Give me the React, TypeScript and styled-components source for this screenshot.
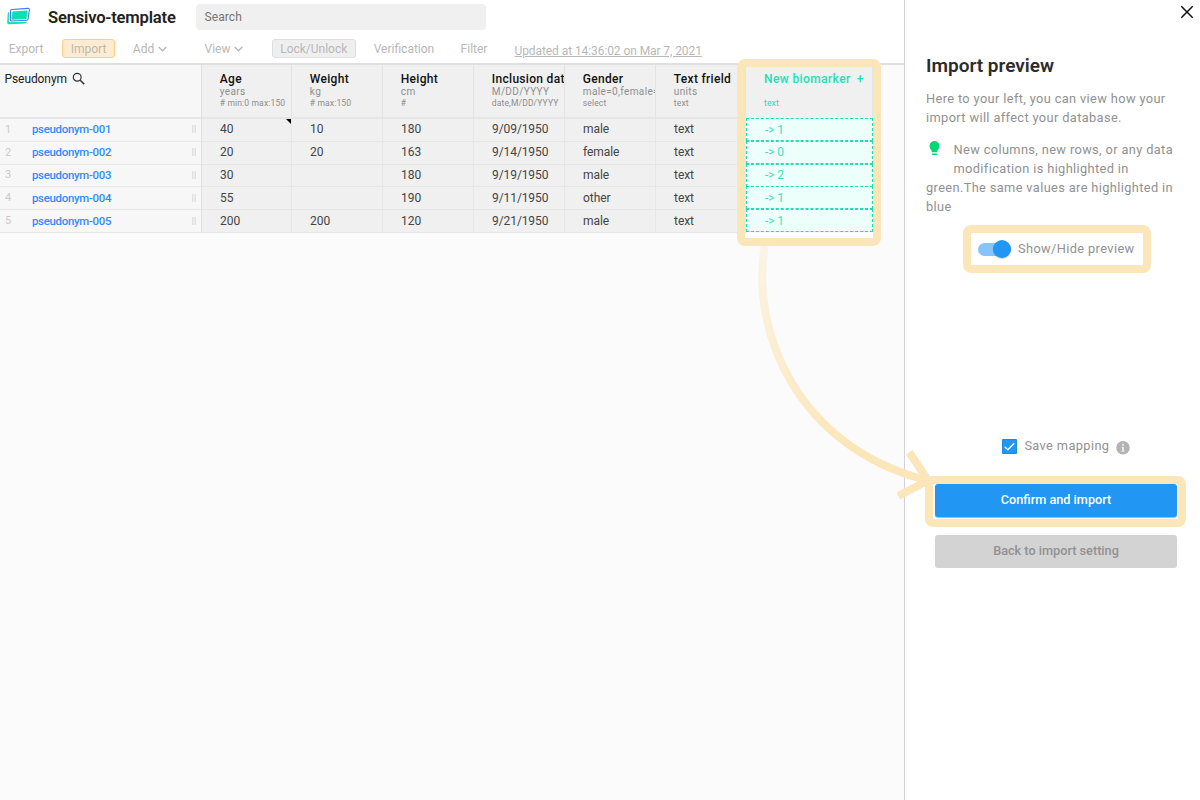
import React from "react";
import styled, { createGlobalStyle } from "styled-components";

const GlobalStyle = createGlobalStyle`
  * { box-sizing: border-box; }
  body { margin: 0; background: #fff; font-family: Roboto, "Liberation Sans", sans-serif; overflow: hidden; }
`;

const Shell = styled.div`
  display: flex;
  position: relative;
  width: 1200px;
  height: 800px;
  overflow: hidden;
`;

const Workspace = styled.main`
  display: flex;
  flex-direction: column;
  width: 904px;
  background: #fbfbfb;
`;

const TopBar = styled.header`
  display: flex;
  flex-direction: column;
  height: 65px;
  background: #fff;
  border-bottom: 2px solid #dfdfdf;
`;

const TitleRow = styled.div`
  display: flex;
  align-items: center;
  height: 33px;
  padding-left: 6px;
`;

const Title = styled.h1`
  width: 147.5px;
  margin: 1px 0 0 17px;
  font-size: 16.6px;
  font-weight: 600;
  letter-spacing: -0.2px;
  color: #212121;
`;

const SearchBox = styled.div`
  width: 290.5px;
  height: 26px;
  padding-left: 9px;
  border-radius: 4px;
  background: #f0f0f0;
  color: #757575;
  font-size: 12px;
  line-height: 26px;
  letter-spacing: 0.1px;
`;

const Toolbar = styled.nav`
  display: flex;
  align-items: center;
  height: 30px;
  color: #b8b8b8;
  font-size: 12px;
  font-weight: 400;
`;

const ToolItem = styled.div<{ $w: number; $tone?: "amber" | "grey" }>`
  display: flex;
  align-items: center;
  justify-content: center;
  gap: 4px;
  width: ${(p) => p.$w}px;
  height: 19px;
  padding-top: 1px;
  border-radius: 3px;
  border: 1px solid
    ${(p) => (p.$tone === "amber" ? "#ffcf87" : p.$tone === "grey" ? "#dedede" : "transparent")};
  background: ${(p) => (p.$tone === "amber" ? "#ffecd0" : p.$tone === "grey" ? "#efefef" : "none")};
  white-space: nowrap;
`;

const ToolGap = styled.div<{ $w: number }>`
  width: ${(p) => p.$w}px;
`;

const Updated = styled.div`
  padding-top: 5px;
  font-size: 12px;
  letter-spacing: -0.08px;
  text-decoration: underline;
  white-space: nowrap;
`;

const Table = styled.div`
  display: grid;
  grid-template-columns: 202px 90px 91px 91px 91px 91px 90px 127px;
  grid-template-rows: 54px repeat(5, 22.8px);
`;

const KeyHead = styled.div`
  display: flex;
  gap: 5.5px;
  padding: 7px 0 0 4.5px;
  border-right: 1px solid #e0e0e0;
  border-bottom: 2px solid #e6e6e6;
  background: #f7f7f7;
  color: #212121;
  font-size: 12px;
  line-height: 14px;
  letter-spacing: -0.08px;
`;

const Head = styled.div<{ $fresh?: boolean }>`
  padding: 7px 0 0 ${(p) => (p.$fresh ? 18 : 17.8)}px;
  overflow: hidden;
  white-space: nowrap;
  border-right: 1px solid #e4e4e4;
  border-bottom: 2px solid ${(p) => (p.$fresh ? "transparent" : "#e6e6e6")};
  background: #f0f0f0;
  color: ${(p) => (p.$fresh ? "#1de0b8" : "#8e8e8e")};
`;

const HeadName = styled.div<{ $fresh?: boolean }>`
  display: flex;
  gap: 6px;
  color: ${(p) => (p.$fresh ? "#1de0b8" : "#111")};
  font-size: 12px;
  font-weight: 500;
  line-height: 14px;
  letter-spacing: ${(p) => (p.$fresh ? 0.4 : 0.3)}px;
`;

const HeadUnit = styled.div`
  height: 12px;
  font-size: 10px;
  line-height: 11px;
  letter-spacing: 0.36px;
`;

const HeadRule = styled.div`
  font-size: 8.5px;
  line-height: 11px;
  letter-spacing: 0.15px;
`;

const KeyCell = styled.div`
  display: flex;
  align-items: center;
  padding: 0 5px 1px 5px;
  border-right: 1px solid #e0e0e0;
  border-bottom: 1px solid #e6e6e6;
  background: #f7f7f7;
`;

const RowNumber = styled.span`
  width: 27px;
  color: #cacaca;
  font-size: 11px;
`;

const KeyLink = styled.a`
  flex: 1;
  color: #3389ff;
  font-size: 11.4px;
  font-weight: 500;
  letter-spacing: -0.28px;
`;

const Grip = styled.span`
  width: 4px;
  height: 8px;
  border-left: 1px solid #e2dfdf;
  border-right: 1px solid #e2dfdf;
  background: #ececec;
`;

const Cell = styled.div<{ $note?: boolean }>`
  position: relative;
  display: flex;
  align-items: center;
  padding: 0 0 1px 18.1px;
  border-right: 1px solid #e6e6e6;
  border-bottom: 1px solid #e6e6e6;
  background: #f0f0f0;
  color: #444;
  font-size: 12px;
  letter-spacing: -0.1px;

  &::after {
    content: "";
    display: ${(p) => (p.$note ? "block" : "none")};
    position: absolute;
    top: 0;
    right: 0;
    border-top: 5px solid #000;
    border-left: 5px solid transparent;
  }
`;

const FreshCell = styled.div`
  display: flex;
  align-items: center;
  margin: -1px 0 0.8px;
  padding-left: 18px;
  border: 1px dashed #19dfb6;
  background: #ecfffb;
  color: #3fdfbe;
  font-size: 12px;
  letter-spacing: -0.1px;
`;

const ColumnFrame = styled.div`
  position: absolute;
  left: 737px;
  top: 59px;
  width: 144px;
  height: 187px;
  border: 8px solid #fbe6ba;
  border-radius: 8px;
`;

const FrameFooter = styled.div`
  width: 128px;
  height: 5px;
  margin-left: 745px;
  background: #fff;
`;

const ArrowLayer = styled.svg`
  position: absolute;
  left: 0;
  top: 0;
  pointer-events: none;
`;

const Panel = styled.aside`
  display: flex;
  flex-direction: column;
  width: 296px;
  padding: 5px 0 0 21px;
  border-left: 1px solid #d3d3d3;
  background: #fff;
`;

const CloseButton = styled.div`
  display: flex;
  align-self: flex-end;
  height: 14px;
  margin-right: 6px;
`;

const PanelTitle = styled.h2`
  margin: 35px 0 0;
  font-size: 19px;
  font-weight: 600;
  line-height: 24px;
  letter-spacing: 0;
  color: #2c2c2c;
`;

const Copy = styled.p<{ $top: number }>`
  margin: ${(p) => p.$top}px 0 0;
  color: #919191;
  font-size: 12.8px;
  line-height: 19px;
  letter-spacing: 0.37px;
  white-space: nowrap;
`;

const BulbSlot = styled.span`
  float: left;
  width: 27.5px;
  height: 30px;
  padding: 1px 0 0 3px;
  line-height: 0;
`;

const ToggleFrame = styled.div`
  display: flex;
  align-items: center;
  gap: 7px;
  width: 188px;
  height: 48px;
  margin: 9px 0 0 37px;
  padding: 0 0 1px 7px;
  border: 8px solid #fbe6ba;
  border-radius: 8px;
  color: #919191;
  font-size: 12.8px;
  letter-spacing: 0.38px;
  white-space: nowrap;
`;

const Track = styled.div`
  display: flex;
  align-items: center;
  justify-content: flex-end;
  width: 33px;
  height: 13px;
  margin-top: 1px;
  border-radius: 7px;
  background: #86c5fa;
`;

const Knob = styled.div`
  width: 18px;
  height: 18px;
  flex: none;
  border-radius: 50%;
  background: #2196f3;
  box-shadow: 0 1px 1px rgba(0, 0, 0, 0.2);
`;

const SaveRow = styled.div`
  display: flex;
  align-items: center;
  height: 17px;
  margin: 165px 0 0 76.4px;
  color: #919191;
  font-size: 12.8px;
  letter-spacing: 0.38px;
`;

const SaveLabel = styled.span`
  width: 92px;
  margin-left: 7px;
  padding-bottom: 2px;
  white-space: nowrap;
`;

const ConfirmFrame = styled.div`
  width: 261px;
  height: 51px;
  margin: 21px 0 0 -1px;
  padding: 0 1px 0 2px;
  border: 8px solid #fbe6ba;
  border-radius: 8px;
`;

const Button = styled.div<{ $primary?: boolean }>`
  height: 33px;
  border-radius: 3px;
  background: ${(p) => (p.$primary ? "#2196f3" : "#d3d3d3")};
  box-shadow: ${(p) => (p.$primary ? "0 1px 1px rgba(0,0,0,.3)" : "none")};
  color: ${(p) => (p.$primary ? "#fff" : "#919191")};
  font-size: 12.7px;
  font-weight: 500;
  line-height: 31px;
  text-align: center;
`;

const BackSlot = styled.div`
  width: 242px;
  margin: 8px 0 0 9px;
`;

const Chevron = () => (
  <svg width="9" height="6" viewBox="0 0 9 6" fill="none" stroke="#b8b8b8" strokeWidth="1.5">
    <path d="M.7 1 4.5 4.8 8.3 1" />
  </svg>
);

const columns = [
  ["Age", "years", "# min:0 max:150"],
  ["Weight", "kg", "# max:150"],
  ["Height", "cm", "#"],
  ["Inclusion date", "M/DD/YYYY", "date,M/DD/YYYY"],
  ["Gender", "male=0,female=1", "select"],
  ["Text frield", "units", "text"],
];

const rows = [
  ["40", "10", "180", "9/09/1950", "male", "text", "1"],
  ["20", "20", "163", "9/14/1950", "female", "text", "0"],
  ["30", "", "180", "9/19/1950", "male", "text", "2"],
  ["55", "", "190", "9/11/1950", "other", "text", "1"],
  ["200", "200", "120", "9/21/1950", "male", "text", "1"],
];

export default function App() {
  return (
    <>
      <GlobalStyle />
      <Shell>
        <Workspace>
          <TopBar>
            <TitleRow>
              <svg width="25" height="19" viewBox="0 0 25 19">
                <path d="M3 5.2Q1.8 5.3 1.7 6.5L1.2 15.6Q1.2 17.4 2.8 17.3L18.6 16.6Q20.4 16.4 20.8 14.8L3.6 15.2Q2.7 15.1 2.8 14Z" fill="#0be0b0" />
                <path d="M5.6 2.5 22.2 1.4Q23.6 1.4 23.4 2.8L22.1 12Q21.9 13.2 20.6 13.3L5.6 14Q4.2 14 4.3 12.6L4.6 3.7Q4.7 2.6 5.6 2.5Z" fill="#fff" stroke="#3d78f5" strokeWidth="1.1" />
                <path d="M6.4 4.4 20.9 3.6Q21.5 3.6 21.4 4.3L20.6 11.9 6.2 12.8Q5.5 12.8 5.5 12.1Z" fill="#0be0b0" />
              </svg>
              <Title>Sensivo-template</Title>
              <SearchBox>Search</SearchBox>
            </TitleRow>
            <Toolbar>
              <ToolItem $w={52}>Export</ToolItem>
              <ToolGap $w={10} />
              <ToolItem $w={53} $tone="amber">Import</ToolItem>
              <ToolGap $w={10} />
              <ToolItem $w={50}>Add <Chevron /></ToolItem>
              <ToolGap $w={23} />
              <ToolItem $w={52}>View <Chevron /></ToolItem>
              <ToolGap $w={21.5} />
              <ToolItem $w={84.5} $tone="grey">Lock/Unlock</ToolItem>
              <ToolGap $w={10} />
              <ToolItem $w={76}>Verification</ToolItem>
              <ToolGap $w={10} />
              <ToolItem $w={44}>Filter</ToolItem>
              <ToolGap $w={18.5} />
              <Updated>Updated at 14:36:02 on Mar 7, 2021</Updated>
            </Toolbar>
          </TopBar>
          <Table>
            <KeyHead>
              Pseudonym
              <svg width="14" height="14" viewBox="0 0 14 14" fill="none" stroke="#333">
                <circle cx="5.2" cy="5.2" r="3.9" strokeWidth="1.2" />
                <path d="M8.2 8.2 12.3 12.3" strokeWidth="1.6" />
              </svg>
            </KeyHead>
            {columns.map(([name, unit, rule]) => (
              <Head key={name}>
                <HeadName>{name}</HeadName>
                <HeadUnit>{unit}</HeadUnit>
                <HeadRule>{rule}</HeadRule>
              </Head>
            ))}
            <Head $fresh>
              <HeadName $fresh><span>New biomarker</span><span>+</span></HeadName>
              <HeadUnit />
              <HeadRule>text</HeadRule>
            </Head>
            {rows.map((row, i) => (
              <React.Fragment key={i}>
                <KeyCell>
                  <RowNumber>{i + 1}</RowNumber>
                  <KeyLink>{`pseudonym-00${i + 1}`}</KeyLink>
                  <Grip />
                </KeyCell>
                {row.slice(0, 6).map((value, j) => (
                  <Cell key={j} $note={i === 0 && j === 0}>{value}</Cell>
                ))}
                <FreshCell>{`-> ${row[6]}`}</FreshCell>
              </React.Fragment>
            ))}
          </Table>
          <FrameFooter />
        </Workspace>
        <Panel>
          <CloseButton>
            <svg width="14" height="14" viewBox="0 0 14 14" stroke="#111" strokeWidth="1.5">
              <path d="M1.3 1.3 12.7 12.7M12.7 1.3 1.3 12.7" />
            </svg>
          </CloseButton>
          <PanelTitle>Import preview</PanelTitle>
          <Copy $top={11}>
            Here to your left, you can view how your<br />import will affect your database.
          </Copy>
          <Copy $top={13}>
            <BulbSlot>
              <svg width="11" height="15" viewBox="0 0 11 15" fill="#00d775">
                <path d="M5.5 0A5 5 0 0 0 .5 5C.5 7 1.5 8.3 2.6 9.2V10.6Q2.6 11.3 3.3 11.3H7.7Q8.4 11.3 8.4 10.6V9.2C9.5 8.3 10.5 7 10.5 5A5 5 0 0 0 5.5 0Z" />
                <path d="M2.8 12.6H8.2V13.1Q8.2 14 7.2 14H3.8Q2.8 14 2.8 13.1Z" />
              </svg>
            </BulbSlot>
            New columns, new rows, or any data<br />modification is highlighted in<br />
            green.The same values are highlighted in<br />blue
          </Copy>
          <ToggleFrame>
            <Track><Knob /></Track>
            Show/Hide preview
          </ToggleFrame>
          <SaveRow>
            <svg width="15" height="15" viewBox="0 0 15 15">
              <rect width="15" height="15" rx="1" fill="#1e88e5" />
              <rect x="1" y="1" width="13" height="13" fill="#2196f3" />
              <path d="M2.7 7.8 5.8 10.8 12.3 4.2" fill="none" stroke="#fff" strokeWidth="1.3" />
            </svg>
            <SaveLabel>Save mapping</SaveLabel>
            <svg width="14" height="17" viewBox="0 -2.7 14 17">
              <circle cx="7" cy="7" r="6.8" fill="#b3b3b3" />
              <path d="M6 3h2v1.7H6zM5.5 6H8v4h.8v1H5.3v-1H6V7h-.5z" fill="#e8e8e8" />
            </svg>
          </SaveRow>
          <ConfirmFrame>
            <Button $primary>Confirm and import</Button>
          </ConfirmFrame>
          <BackSlot>
            <Button>Back to import setting</Button>
          </BackSlot>
        </Panel>
        <ColumnFrame />
        <ArrowLayer width="1200" height="800" viewBox="0 0 1200 800" fill="none">
          <defs>
            <linearGradient id="fade" gradientUnits="userSpaceOnUse" x1="762" y1="235" x2="850" y2="450">
              <stop offset="0" stopColor="#fbe6ba" stopOpacity="0.3" />
              <stop offset="1" stopColor="#fbe6ba" />
            </linearGradient>
          </defs>
          <path d="M764.8 246C750 332 798 445 922 479" stroke="url(#fade)" strokeWidth="8" />
          <path d="M909.3 452.3 928 480.5 898.3 496" stroke="#fbe6ba" strokeWidth="8" />
        </ArrowLayer>
      </Shell>
    </>
  );
}
